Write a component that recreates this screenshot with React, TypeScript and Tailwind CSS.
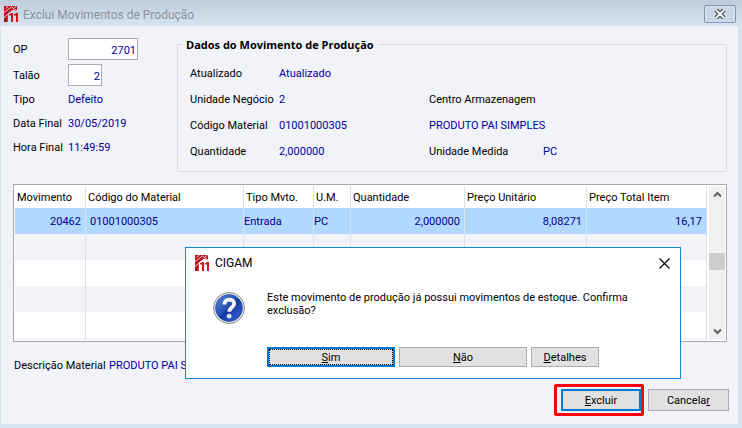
import { ReactNode } from 'react';

const columns = [
  { title: 'Movimento', width: 'w-[71px]' },
  { title: 'Código do Material', width: 'w-[158px]' },
  { title: 'Tipo Mvto.', width: 'w-[70px]' },
  { title: 'U.M.', width: 'w-[37px]' },
  { title: 'Quantidade', width: 'w-[114px]' },
  { title: 'Preço Unitário', width: 'w-[122px]' },
  { title: 'Preço Total Item', width: 'w-auto' },
];

const movement = [
  { value: '20462', style: 'text-right pr-1' },
  { value: '01001000305', style: 'pl-1' },
  { value: 'Entrada', style: '' },
  { value: 'PC', style: '' },
  { value: '2,000000', style: 'text-right pr-1' },
  { value: '8,08271', style: 'text-right pr-1' },
  { value: '16,17', style: 'text-right pr-1' },
];

const emptyRows = [
  'h-[26px] bg-[#f2f3f9]',
  'h-[26px] bg-white',
  'h-[26px] bg-[#f2f3f9]',
  'h-[26px] bg-white',
  'h-[2px] bg-[#f2f3f9]',
];

function Logo() {
  return (
    <svg width="14" height="16" viewBox="0 0 14 16" aria-hidden="true">
      <path d="M0 0h13v5.500L9 3.500 3.800 7.500V16H0z" fill="#b81219" />
      <path d="M0 6.500 7.500 1 13 5M1.500 2.500 4.500 0M10 2 12.500 0M0 11.500 4 8" fill="none" stroke="#f6e4e6" strokeWidth="0.9" />
      <path d="M5 8h1l1-1h2v9H7V9.500H5zM10 8h1l1-1h2v9h-2V9.500h-2z" fill="#d4101b" />
    </svg>
  );
}

function QuestionIcon() {
  return (
    <svg width="32" height="32" viewBox="0 0 32 32" aria-hidden="true">
      <defs>
        <linearGradient id="ball" x1="0" y1="0" x2="1" y2="1">
          <stop offset="0" stopColor="#5f8ede" />
          <stop offset="0.45" stopColor="#2450b4" />
          <stop offset="0.5" stopColor="#153a9b" />
          <stop offset="1" stopColor="#3c66e8" />
        </linearGradient>
      </defs>
      <circle cx="16" cy="16" r="15.500" fill="#e6e8ea" stroke="#8d9094" />
      <circle cx="16" cy="16" r="13.500" fill="url(#ball)" stroke="#1f3f93" strokeWidth="0.6" />
      <path
        d="M11.500 12.500c0-3.200 1.800-4.900 4.700-4.900 2.900 0 5 1.500 5 4.100 0 3.600-4.900 3.700-4.900 8"
        fill="none"
        stroke="#f4f6fa"
        strokeWidth="3.8"
      />
      <circle cx="16.200" cy="24.200" r="2.400" fill="#dfe4ee" />
    </svg>
  );
}

function Field({ label, children }: { label: string; children: ReactNode }) {
  return (
    <div className="flex h-6 items-center">
      <dt className="w-[55px] whitespace-nowrap">{label}</dt>
      <dd className="text-[#0000a0]">{children}</dd>
    </div>
  );
}

export default function App() {
  return (
    <div className="relative flex min-h-screen flex-col bg-[#d6e4f2] pb-1 font-['Roboto',sans-serif] text-[11px] leading-[13px] text-black">
      <header className="flex h-[26px] items-center bg-linear-to-b from-[#bfcddb] to-[#d6e4f2] pt-px pr-[6px] pl-1">
        <Logo />
        <h1 className="ml-[5px] flex-1 pt-[2px] text-[12px] leading-4 text-[#8e9299]">Exclui Movimentos de Produção</h1>
        <button
          type="button"
          aria-label="Fechar"
          className="flex h-[18px] w-8 items-center justify-center rounded-[2px] border border-[#8791b3] bg-[#c8d6e5] shadow-[inset_0_0_0_1px_#d8e3ef]"
        >
          <svg width="12" height="10" viewBox="0 0 12 10">
            <path d="M2 1 10 9M10 1 2 9" stroke="#454b5c" strokeWidth="4.4" />
            <path d="M2 1 10 9M10 1 2 9" stroke="#fff" strokeWidth="2" />
          </svg>
        </button>
      </header>

      <main className="mr-1 ml-px flex-1 bg-[#f2f3f9] pr-[11px] pl-3">
        <div className="grid grid-cols-[164px_1fr] pt-3">
          <div>
            <div className="mb-1 flex items-center">
              <label htmlFor="op" className="w-[55px]">OP</label>
              <input
                id="op"
                defaultValue="2701"
                className="h-[22px] w-[70px] border border-[#abadb3] bg-white pt-[2px] pr-px text-right text-[#0000a0]"
              />
            </div>
            <div className="flex items-center">
              <label htmlFor="talao" className="w-[55px]">Talão</label>
              <input
                id="talao"
                defaultValue="2"
                className="h-[22px] w-[34px] border border-[#abadb3] bg-white pt-[2px] pr-px text-right text-[#0000a0]"
              />
            </div>
            <dl className="mt-px">
              <Field label="Tipo">Defeito</Field>
              <Field label="Data Final">30/05/2019</Field>
              <Field label="Hora Final">11:49:59</Field>
            </dl>
          </div>

          <fieldset className="h-[134px] border border-[#dadbe0] pl-3">
            <legend className="-ml-2 px-1 font-['Open_Sans',sans-serif] font-bold">
              Dados do Movimento de Produção
            </legend>
            <div className="grid auto-rows-[26px] grid-cols-[89px_150px_114px_1fr] items-center pt-[9px]">
              <span>Atualizado</span>
              <span className="col-span-3 text-[#0000a0]">Atualizado</span>
              <span>Unidade Negócio</span>
              <span className="text-[#0000a0]">2</span>
              <span className="col-span-2">Centro Armazenagem</span>
              <span>Código Material</span>
              <span className="text-[#0000a0]">01001000305</span>
              <span className="col-span-2 text-[#0000a0]">PRODUTO PAI SIMPLES</span>
              <span>Quantidade</span>
              <span className="text-[#0000a0]">2,000000</span>
              <span>Unidade Medida</span>
              <span className="text-[#0000a0]">PC</span>
            </div>
          </fieldset>
        </div>

        <div className="mt-3 flex border border-[#a7a9b1] bg-white p-px">
          <table className="flex-1 table-fixed border-separate border-spacing-0">
            <thead>
              <tr className="h-[22px]">
                {columns.map((col) => (
                  <th
                    key={col.title}
                    className={`${col.width} border-r border-[#dfe0e2] pl-[2px] text-left font-normal whitespace-nowrap`}
                  >
                    {col.title}
                  </th>
                ))}
              </tr>
            </thead>
            <tbody>
              <tr className="h-[26px] bg-[#b1d8ff] text-[#00008c]">
                {movement.map((cell, i) => (
                  <td key={i} className={`border-r border-[#dfe0e2] ${cell.style}`}>
                    {cell.value}
                  </td>
                ))}
              </tr>
              {emptyRows.map((row, i) => (
                <tr key={i} className={row}>
                  {columns.map((col) => (
                    <td key={col.title} className="border-r border-[#dfe0e2]" />
                  ))}
                </tr>
              ))}
            </tbody>
          </table>
          {/* scroll bar */}
          <div className="ml-[2px] flex w-4 flex-col items-center bg-[#f0f0f0] py-[5px]">
            <svg width="9" height="7" viewBox="0 0 9 7">
              <path d="M1 5.500 4.500 2 8 5.500" fill="none" stroke="#606060" strokeWidth="2" />
            </svg>
            <div className="mt-[55px] h-[17px] w-4 bg-[#cdcdcd]" />
            <svg className="mt-auto" width="9" height="7" viewBox="0 0 9 7">
              <path d="M1 1.500 4.500 5 8 1.500" fill="none" stroke="#606060" strokeWidth="2" />
            </svg>
          </div>
        </div>

        <dl className="mt-[17px] flex pl-px">
          <dt className="w-[95px]">Descrição Material</dt>
          <dd className="text-[#0000a0]">PRODUTO PAI SIMPLES</dd>
        </dl>

        <div className="-mr-[2px] mt-3 flex items-center justify-end gap-1">
          <div className="rounded-[2px] border-3 border-[#fb0007] py-[2px] pl-1">
            <button type="button" className="block h-[22px] w-20 border-2 border-[#0078d7] bg-[#e1e1e1]">
              <u>E</u>xcluir
            </button>
          </div>
          <button type="button" className="h-[22px] w-[81px] border border-[#adadad] bg-[#e1e1e1]">
            Cancela<u>r</u>
          </button>
        </div>
      </main>

      <div
        role="dialog"
        aria-label="CIGAM"
        className="absolute top-[247px] left-[185px] w-[496px] border border-[#1883d7] bg-white pb-[11px]"
      >
        <div className="flex h-[30px] items-center pr-[10px] pl-[9px]">
          <Logo />
          <h2 className="ml-[6px] flex-1 text-[12px]">CIGAM</h2>
          <button type="button" aria-label="Fechar">
            <svg width="11" height="11" viewBox="0 0 11 11">
              <path d="M0.500 0.500 10.500 10.500M10.500 0.500 0.500 10.500" stroke="#000" strokeWidth="1.1" />
            </svg>
          </button>
        </div>
        <div className="flex h-[69px] gap-[22px] pt-[14px] pl-[27px]">
          <QuestionIcon />
          <p className="-mt-px w-[370px]">
            Este movimento de produção já possui movimentos de estoque. Confirma exclusão?
          </p>
        </div>
        <div className="flex gap-1 pl-[81px]">
          <button
            type="button"
            className="h-5 w-32 border-2 border-[#0078d7] bg-[#e1e1e1] outline-1 -outline-offset-3 outline-black outline-dotted"
          >
            <u>S</u>im
          </button>
          <button type="button" className="h-5 w-32 border border-[#adadad] bg-[#e1e1e1]">
            <u>N</u>ão
          </button>
          <button type="button" className="h-5 w-[68px] border border-[#adadad] bg-[#e1e1e1]">
            <u>D</u>etalhes
          </button>
        </div>
      </div>
    </div>
  );
}
